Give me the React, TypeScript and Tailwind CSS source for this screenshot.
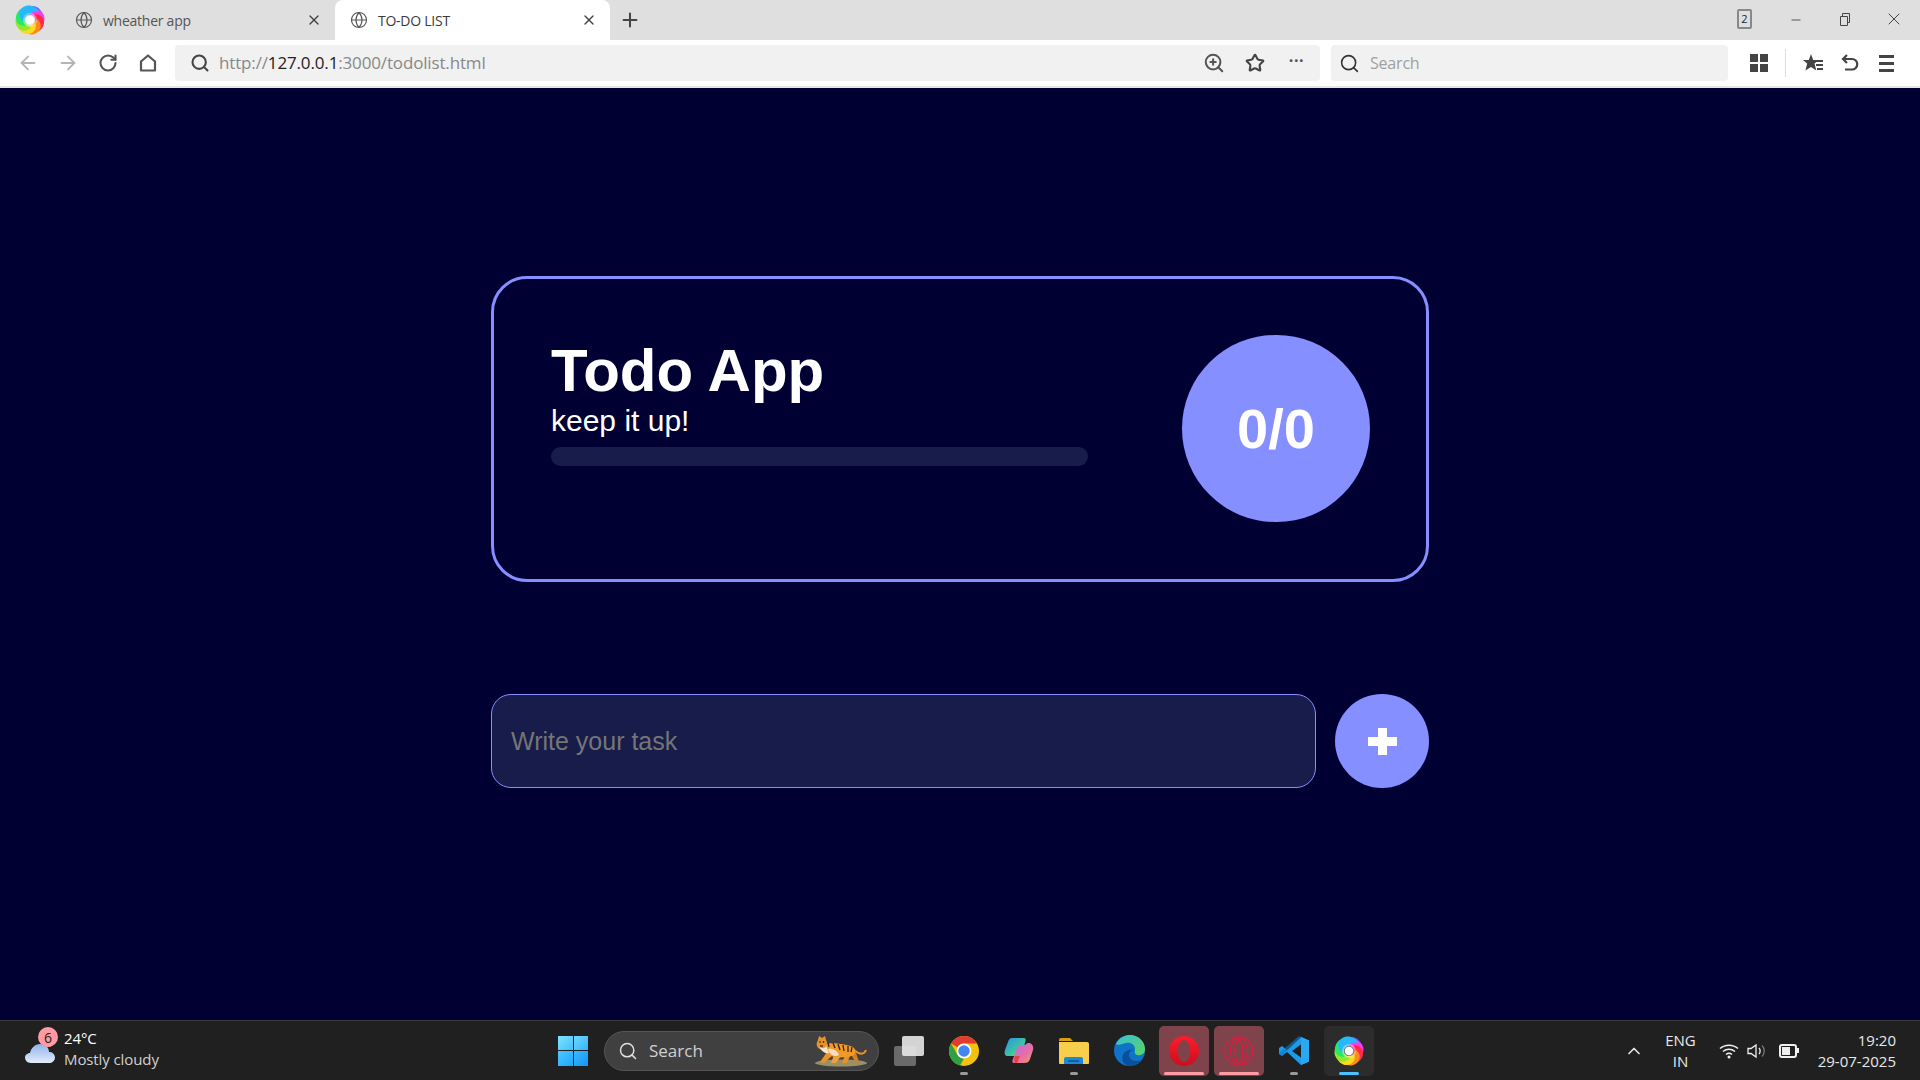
import type { ReactNode } from "react";
import { Globe, X, Plus, ArrowLeft, ArrowRight, RotateCw, Search, ZoomIn, Star, Minus, ChevronUp } from "lucide-react";

const uiFont = "font-['Open_Sans','Noto_Sans',sans-serif]";
const pageFont = "font-['Liberation_Sans',Arial,sans-serif]";

function SwirlLogo({ size = 28, id }: { size?: number; id: string }) {
  const colors = ["#6a5cff", "#f23df0", "#ff2a4a", "#ff8a1f", "#ffd91f", "#8fe82b", "#25e86a", "#25b8ff"];
  return (
    <svg width={size} height={size} viewBox="0 0 32 32" className="shrink-0">
      <defs>
        <filter id={id} x="-20%" y="-20%" width="140%" height="140%">
          <feGaussianBlur stdDeviation="0.6" />
        </filter>
      </defs>
      <g filter={`url(#${id})`}>
        {colors.map((c, i) => (
          <path
            key={c}
            d="M13 9C16 1 26 1 30 9C32 14 31 20 27 23C27 17 22 12 13 9Z"
            fill={c}
            transform={`rotate(${i * 45 - 30} 16 16)`}
          />
        ))}
        <circle cx="16" cy="16" r="7.500" fill="#fff" opacity="0.35" />
      </g>
      <circle cx="16" cy="16" r="4.500" fill="#fff" />
    </svg>
  );
}

function Tab({ title, active }: { title: string; active?: boolean }) {
  return (
    <div
      className={`flex h-10 w-[275px] items-center pl-[15px] pr-[13px] ${
        active ? "rounded-t-[8px] bg-white text-[#3a3a3a]" : "text-[#555]"
      }`}
    >
      <Globe size={18} strokeWidth={1.5} className="text-[#555]" />
      <span className="ml-[10px] flex-1 text-[14px] tracking-[-0.25px]">{title}</span>
      <X size={16} strokeWidth={2} className="text-[#444]" />
    </div>
  );
}

function HomeIcon() {
  return (
    <svg width="20" height="20" viewBox="0 0 20 20" fill="none" stroke="#555" strokeWidth="2.2" strokeLinejoin="round">
      <path d="M3 17.500V8.500L10 2.500L17 8.500V17.500Z" />
    </svg>
  );
}

function FavList() {
  return (
    <svg width="22" height="22" viewBox="0 0 22 22" fill="#444">
      <path d="M9 2l2.200 6H17l-4.500 3.600 1.800 7L9 15l-5.600 3.600 1.800-7L1 8h5.800z" />
      <path d="M13 8h8v2h-8zM14 12h7v2h-7zM15 16h6v2h-6z" />
    </svg>
  );
}

function UndoIcon() {
  return (
    <svg width="20" height="20" viewBox="0 0 20 20" fill="none" stroke="#444" strokeWidth="2.2">
      <path d="M7 2L3 6l4 4" />
      <path d="M3 6h9a4.500 4.500 0 0 1 0 10.500H5" />
    </svg>
  );
}

function BrowserChrome() {
  return (
    <div className={`${uiFont} shrink-0`}>
      <div className="flex h-10 items-center bg-[#dfdfdf]">
        <div className="flex w-[60px] justify-start pl-[15px]">
          <SwirlLogo size={30} id="swirl-top" />
        </div>
        <Tab title="wheather app" />
        <Tab title="TO-DO LIST" active />
        <Plus size={22} strokeWidth={2.2} className="ml-[9px] text-[#444]" />
        <div className="flex-1" />
        <div className="mb-[2px] flex h-[20px] w-[15px] items-center justify-center rounded-[2px] border-2 border-[#888] text-[11px] text-[#222]">
          2
        </div>
        <Minus size={14} strokeWidth={2} className="ml-[37px] text-[#555]" />
        <svg width="14" height="14" viewBox="0 0 14 14" fill="none" stroke="#444" className="mb-[2px] ml-[35px]">
          <path d="M2.500 4.500h7v9h-7zM4.500 4.500v-3h7v9h-2" />
        </svg>
        <X size={20} strokeWidth={1.2} className="mb-[2px] ml-[32px] mr-[16px] text-[#444]" />
      </div>
      <div className="flex h-[46px] items-center bg-white pl-[17px]">
        <ArrowLeft size={22} strokeWidth={2} className="text-[#b5b5b5]" />
        <ArrowRight size={22} strokeWidth={2} className="ml-[18px] text-[#b5b5b5]" />
        <RotateCw size={20} strokeWidth={2.5} className="ml-[19px] text-[#555]" />
        <div className="ml-[20px]">
          <HomeIcon />
        </div>
        <div className="ml-[17px] flex h-[36px] w-[1145px] items-center rounded-[4px] bg-[#f1f1f1] pl-[15px] pr-[16px]">
          <Search size={20} strokeWidth={2.5} className="text-[#444]" />
          <span className="ml-[9px] flex-1 text-[17px] tracking-[-0.15px] text-[#888]">
            http://<span className="text-[#222]">127.0.0.1</span>:3000/todolist.html
          </span>
          <ZoomIn size={22} strokeWidth={2.2} className="mr-[3px] text-[#555]" />
          <Star size={20} strokeWidth={2.5} className="ml-[17px] text-[#444]" />
          <span className="ml-[24px] mb-[6px] text-[16px] font-bold leading-none tracking-[0.5px] text-[#555]">···</span>
        </div>
        <div className="ml-[11px] flex h-[36px] w-[397px] items-center rounded-[4px] bg-[#f1f1f1] pl-[8px]">
          <Search size={21} strokeWidth={1.8} className="text-[#333]" />
          <span className="ml-[10px] text-[16px] tracking-[-0.2px] text-[#a0a0a0]">Search</span>
        </div>
        <div className="ml-[22px] grid grid-cols-2 gap-[2px]">
          <div className="h-[8px] w-[8px] bg-[#444]" />
          <div className="h-[8px] w-[8px] bg-[#444]" />
          <div className="h-[8px] w-[8px] bg-[#444]" />
          <div className="h-[8px] w-[8px] bg-[#444]" />
        </div>
        <div className="ml-[17px] h-[28px] w-px bg-[#ddd]" />
        <div className="ml-[16px]">
          <FavList />
        </div>
        <div className="ml-[16px]">
          <UndoIcon />
        </div>
        <div className="ml-[19px] flex flex-col gap-[4px]">
          <div className="h-[3px] w-[15px] bg-[#444]" />
          <div className="h-[3px] w-[15px] bg-[#444]" />
          <div className="h-[3px] w-[15px] bg-[#444]" />
        </div>
      </div>
      <div className="h-[2px] bg-[#e6e6e6]" />
    </div>
  );
}

function TodoPage() {
  return (
    <div className={`${pageFont} flex flex-1 flex-col items-center bg-[#000033] pt-[188px] text-white`}>
      <div className="flex h-[306px] w-[938px] items-center justify-between rounded-[36px] border-[3px] border-[#858fff] pl-[57px] pr-[56px]">
        <div className="mb-[56px] w-[537px]">
          <h1 className="text-[60px] leading-[67px] font-bold">Todo App</h1>
          <p className="text-[30px] leading-[34px]">keep it up!</p>
          <div className="mt-[9px] h-[19px] rounded-[10px] bg-[#181c4a]" />
        </div>
        <div className="mb-[1px] flex h-[187px] w-[188px] items-center justify-center rounded-full bg-[#858fff] text-[56px] font-bold">
          0/0
        </div>
      </div>
      <div className="mt-[112px] flex w-[938px] justify-between">
        <input
          placeholder="Write your task"
          className="h-[94px] w-[825px] rounded-[20px] border border-[#858fff] bg-[#181c4a] pl-[19px] text-[25px] text-white outline-none placeholder:text-[#757575]"
        />
        <button className="flex h-[94px] w-[94px] items-center justify-center rounded-full bg-[#858fff] text-white">
          <svg width="29" height="27" viewBox="0 0 29 27" fill="#fff">
            <path d="M10 0h9v9h10v9H19v9h-9v-9H0V9h10z" />
          </svg>
        </button>
      </div>
    </div>
  );
}

function TaskItem({ children, active, tint, bar }: { children: ReactNode; active?: boolean; tint?: boolean; bar?: string }) {
  return (
    <div
      className={`relative flex h-[50px] w-[50px] items-center justify-center rounded-[5px] ${
        tint ? "bg-[#7f444b]" : active ? "bg-[#2c2c2c]" : ""
      }`}
    >
      {children}
      {bar && <div className={`absolute bottom-[1px] left-1/2 h-[3px] -translate-x-1/2 rounded-full ${bar}`} />}
    </div>
  );
}

function WindowsLogo() {
  return (
    <div className="grid h-[30px] w-[30px] grid-cols-2 gap-[1px]">
      <div className="bg-gradient-to-br from-[#7fe2ff] to-[#3fc0fb]" />
      <div className="bg-gradient-to-br from-[#6fd8ff] to-[#2fb4fb]" />
      <div className="bg-gradient-to-br from-[#4cc8fd] to-[#1ba6fb]" />
      <div className="bg-gradient-to-br from-[#3ab8fd] to-[#0f96f5]" />
    </div>
  );
}

function Tiger() {
  return (
    <svg width="54" height="32" viewBox="0 0 54 32" className="shrink-0">
      <ellipse cx="27" cy="28" rx="26" ry="3.500" fill="#9a9068" />
      <path d="M40 15 C46 20 50 20 52 15" fill="none" stroke="#e8922a" strokeWidth="2" />
      {/* legs */}
      <path d="M13 17 L6 27 L10 28 L19 20Z" fill="#e8922a" />
      <path d="M20 20 L17 28 L22 28 L27 21Z" fill="#f0a040" />
      <path d="M31 20 L28 28 L33 28 L36 21Z" fill="#e8922a" />
      <path d="M37 19 L41 27 L45 27 L41 15Z" fill="#d8801f" />
      {/* body and head */}
      <path d="M11 9 C18 7 32 9 39 12 C42 14 42 20 38 21 C30 23 20 23 14 20 C10 18 9 13 11 9Z" fill="#f09a2a" />
      <path d="M4 5 L5 1 L8 3 L11 1 L12 5 C14 8 13 12 10 14 C7 15 4 14 3 11 C2 9 3 7 4 5Z" fill="#e8922a" />
      <path d="M5 11 C7 14 11 14 12 11 L15 18 C11 19 7 16 5 11Z" fill="#f6e6d0" />
      <path d="M14 14 C18 13 23 15 25 20 C21 22 16 21 14 14Z" fill="#f6dcc0" />
      {/* stripes */}
      <path d="M19 8l2 5M24 9l2 6M29 10l1 6M34 11l0 6M38 12l-1 5M14 8l1 4" stroke="#3a2010" strokeWidth="1.300" fill="none" />
      <circle cx="6" cy="7" r="0.800" fill="#111" />
      <circle cx="9.500" cy="7" r="0.800" fill="#111" />
      <path d="M6 11h3" stroke="#222" strokeWidth="1.200" />
    </svg>
  );
}

function CloudIcon() {
  return (
    <svg width="30" height="19" viewBox="0 0 30 19" className="relative">
      <defs>
        <linearGradient id="cloud-fill" x1="0" y1="0" x2="0" y2="1">
          <stop offset="0" stopColor="#8fb4ea" />
          <stop offset="1" stopColor="#e4ebfa" />
        </linearGradient>
      </defs>
      <path d="M6 19 C2 19 0 16 0 13.500 C0 10.500 3 9 5 9 C6 4 10 0 15 0 C20 0 24 3 24 8 C27 8 30 10 30 13.500 C30 17 27 19 24 19Z" fill="url(#cloud-fill)" />
    </svg>
  );
}

function ChromeIcon() {
  return (
    <svg width="30" height="30" viewBox="0 0 30 30">
      <circle cx="15" cy="15" r="15" fill="#f4c20d" />
      <path d="M15 0A15 15 0 0 1 28 7.500H15A7.500 7.500 0 0 0 8.500 11.200L2 7.500A15 15 0 0 1 15 0Z" fill="#e33b2e" />
      <path d="M2 7.500L8.500 18.800A7.500 7.500 0 0 0 15 22.500L11 29.500A15 15 0 0 1 2 7.500Z" fill="#319f43" />
      <circle cx="15" cy="15" r="7.500" fill="#fff" />
      <circle cx="15" cy="15" r="5.700" fill="#4285f4" />
    </svg>
  );
}

function CopilotIcon() {
  return (
    <svg width="30" height="27" viewBox="0 0 30 27">
      <defs>
        <linearGradient id="cop-a" x1="0" y1="0" x2="1" y2="1">
          <stop offset="0" stopColor="#2f8fe8" />
          <stop offset="0.6" stopColor="#3cc6a0" />
          <stop offset="1" stopColor="#d9d23c" />
        </linearGradient>
        <linearGradient id="cop-b" x1="0" y1="0" x2="1" y2="1">
          <stop offset="0" stopColor="#b06ee8" />
          <stop offset="0.6" stopColor="#e86ea8" />
          <stop offset="1" stopColor="#f5a050" />
        </linearGradient>
      </defs>
      <path d="M8 1H20C22 1 22 3 21 6L18 15C17 18 15 19 12 19H4C1 19 0 17 1 13L4 5C5 2 6 1 8 1Z" fill="url(#cop-a)" />
      <path d="M24 6C28 6 30 9 29 13L26 22C25 25 23 26 20 26H10C8 26 8 24 9 22L12 14C13 10 15 8 18 8H21C22 7 23 6 24 6Z" fill="url(#cop-b)" />
      <path d="M11 19H16L13 26H11C10 24 10 21 11 19Z" fill="#e8433a" />
    </svg>
  );
}

function FolderIcon() {
  return (
    <svg width="30" height="28" viewBox="0 0 30 28">
      <path d="M0 3a2 2 0 0 1 2-2h9l3 3h-14z" fill="#d9a00c" />
      <path d="M0 5h28a2 2 0 0 1 2 2v19a1 1 0 0 1-1 1H1a1 1 0 0 1-1-1Z" fill="#f7cf4c" />
      <path d="M5 27v-5a2 2 0 0 1 2-2h15a2 2 0 0 1 2 2v5Z" fill="#1e88d8" />
      <rect x="9" y="23" width="11" height="2" fill="#0d5fa8" />
    </svg>
  );
}

function EdgeIcon() {
  return (
    <svg width="31" height="31" viewBox="0 0 31 31">
      <defs>
        <linearGradient id="edge-a" x1="0" y1="0" x2="1" y2="1">
          <stop offset="0" stopColor="#36c0d8" />
          <stop offset="1" stopColor="#5fd35c" />
        </linearGradient>
      </defs>
      <circle cx="15.500" cy="15.500" r="15.500" fill="#0f74c8" />
      <path d="M2 9C5 2 12 0 16 0C25 0 31 7 31 14C31 19 27 21 23 20C20 19 21 16 21 14C21 10 17 7 12 8C7 9 4 11 2 9Z" fill="url(#edge-a)" />
      <path d="M14 31C8 29 7 22 10 18C12 15 17 14 19 15C15 16 14 20 16 23C18 26 23 27 27 25C24 29 19 32 14 31Z" fill="#0c4f9a" />
    </svg>
  );
}

function OperaIcon({ outline }: { outline?: boolean }) {
  if (outline) {
    return (
      <svg width="30" height="30" viewBox="0 0 30 30" fill="none" stroke="#e8173f" strokeWidth="1.200">
        <circle cx="15" cy="15" r="14" />
        <ellipse cx="15" cy="15" rx="8.500" ry="13" />
        <ellipse cx="15" cy="15" rx="4" ry="11" />
      </svg>
    );
  }
  return (
    <svg width="30" height="30" viewBox="0 0 30 30">
      <defs>
        <linearGradient id="op-a" x1="0" y1="0" x2="0" y2="1">
          <stop offset="0" stopColor="#ff1b2d" />
          <stop offset="1" stopColor="#c80f1f" />
        </linearGradient>
      </defs>
      <path fillRule="evenodd" d="M15 0a15 15 0 1 0 0 30a15 15 0 1 0 0-30ZM15 4c3.500 0 6 5 6 11s-2.500 11-6 11s-6-5-6-11s2.500-11 6-11Z" fill="url(#op-a)" />
    </svg>
  );
}

function VsCodeIcon() {
  return (
    <svg width="30" height="30" viewBox="0 0 30 30">
      <path d="M22 1L30 4.500V25.500L22 29L8 16L3 20L0 18V12L3 10L8 14ZM22 8.500L13 15L22 21.500Z" fill="#1d9be8" />
      <path d="M22 1L30 4.500V25.500L22 29Z" fill="#2aa9f0" />
      <path d="M22 1L3 20L0 18V17L20 0Z" fill="#0a78c8" opacity="0.6" />
    </svg>
  );
}

function Taskbar() {
  return (
    <div className={`${uiFont} flex h-[60px] shrink-0 items-center border-t border-[#3a3a3a] bg-[#202020] text-white`}>
      <div className="flex w-[558px] items-center pl-[25px]">
        <div className="relative mt-[6px] flex">
          <div className="absolute -top-[5px] left-[18px] h-[8px] w-[8px] bg-[#e8831f]" />
          <CloudIcon />
          <div className="absolute -top-[17px] left-[13px] flex h-[20px] w-[20px] items-center justify-center rounded-full bg-[#ff9aa2] text-[14px] text-[#222]">
            6
          </div>
        </div>
        <div className="mb-[3px] ml-[9px] text-[15px] leading-[21px] tracking-[-0.1px]">
          <div>24°C</div>
          <div className="text-[#d0d0d0]">Mostly cloudy</div>
        </div>
      </div>
      <WindowsLogo />
      <div className="ml-[16px] flex h-[40px] w-[275px] items-center rounded-full border border-[#555] bg-[#404040] pl-[13px] pr-[10px]">
        <Search size={20} strokeWidth={1.8} className="text-[#e0e0e0]" />
        <span className="ml-[11px] flex-1 text-[17px] text-[#d0d0d0]">Search</span>
        <Tiger />
      </div>
      <div className="ml-[5px] flex items-center gap-[5px]">
        <TaskItem>
          <div className="relative h-[30px] w-[30px]">
            <div className="absolute bottom-0 left-0 h-[20px] w-[22px] rounded-[2px] bg-[#6a6a6a]" />
            <div className="absolute right-0 top-0 h-[20px] w-[22px] rounded-[2px] bg-[#e8e8e8] opacity-90" />
          </div>
        </TaskItem>
        <TaskItem bar="w-[8px] bg-[#9a9a9a]">
          <ChromeIcon />
        </TaskItem>
        <TaskItem>
          <CopilotIcon />
        </TaskItem>
        <TaskItem bar="w-[8px] bg-[#9a9a9a]">
          <FolderIcon />
        </TaskItem>
        <TaskItem>
          <EdgeIcon />
        </TaskItem>
        <TaskItem tint bar="w-[40px] bg-[#ff9aa2]">
          <OperaIcon />
        </TaskItem>
        <TaskItem tint bar="w-[40px] bg-[#ff9aa2]">
          <OperaIcon outline />
        </TaskItem>
        <TaskItem bar="w-[8px] bg-[#9a9a9a]">
          <VsCodeIcon />
        </TaskItem>
        <TaskItem active bar="w-[20px] bg-[#4cc2ff]">
          <SwirlLogo size={30} id="swirl-task" />
        </TaskItem>
      </div>
      <div className="flex-1" />
      <ChevronUp size={20} strokeWidth={2} className="text-[#e8e8e8]" />
      <div className="ml-[21px] text-center text-[15px] leading-[21px] text-[#e8e8e8]">
        <div>ENG</div>
        <div>IN</div>
      </div>
      <svg width="20" height="16" viewBox="0 0 20 16" fill="none" stroke="#f0f0f0" strokeWidth="1.500" className="ml-[23px]">
        <path d="M1 5.500C6 1 14 1 19 5.500M4 8.500C7.500 5.500 12.500 5.500 16 8.500M7 11.500C8.800 10 11.200 10 13 11.500" />
        <circle cx="10" cy="14" r="1.500" fill="#f0f0f0" stroke="none" />
      </svg>
      <svg width="20" height="16" viewBox="0 0 20 16" fill="none" stroke="#f0f0f0" strokeWidth="1.300" className="ml-[8px]">
        <path d="M1 5.500h3L9 2v12L4 10.500H1Z" />
        <path d="M12 5c1.500 1.500 1.500 4.500 0 6" />
        <path d="M15 2.500c3 3 3 8 0 11" stroke="#777" />
      </svg>
      <div className="ml-[12px] flex items-center">
        <div className="flex h-[14px] w-[18px] items-center rounded-[3px] border-2 border-[#f0f0f0] p-px">
          <div className="h-full w-[8px] bg-[#f0f0f0]" />
        </div>
        <div className="h-[5px] w-[2px] bg-[#f0f0f0]" />
      </div>
      <div className="ml-[19px] mr-[24px] text-right text-[15px] leading-[21px] text-[#e8e8e8]">
        <div>19:20</div>
        <div>29-07-2025</div>
      </div>
    </div>
  );
}

export default function App() {
  return (
    <div className="flex h-screen w-screen flex-col overflow-hidden">
      <BrowserChrome />
      <TodoPage />
      <Taskbar />
    </div>
  );
}
